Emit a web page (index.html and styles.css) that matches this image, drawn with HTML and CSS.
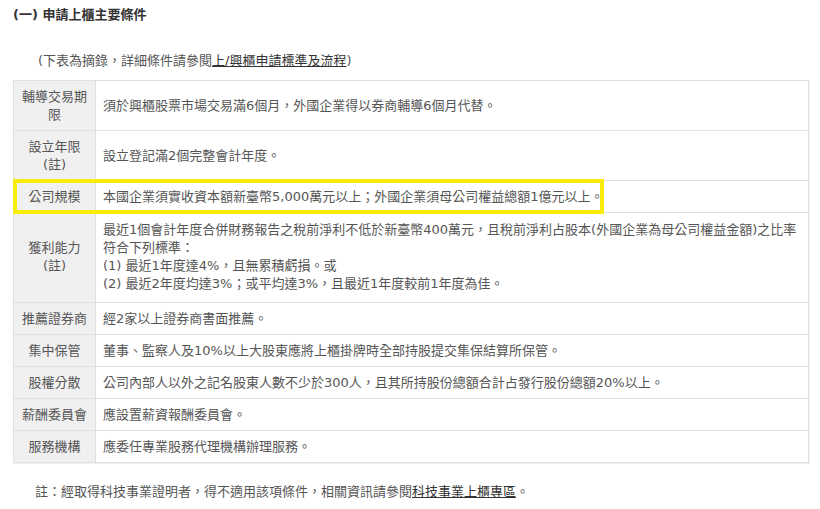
FILE: index.html
```html
<!DOCTYPE html>
<html lang="zh-Hant">
<head>
    <meta charset="UTF-8">
    <meta name="viewport" content="width=device-width, initial-scale=1.0">
    <title>申請上櫃主要條件</title>
    <link rel="stylesheet" href="styles.css">
</head>
<body>
    <div class="page">
        <h3 class="title">(一) 申請上櫃主要條件</h3>
        <p class="intro">(下表為摘錄，詳細條件請參閱<a href="#">上/興櫃申請標準及流程</a>)</p>

        <div class="table-box">
            <table class="terms">
                <colgroup>
                    <col class="col-label">
                    <col>
                </colgroup>
                <tr>
                    <th>輔導交易期限</th>
                    <td>須於興櫃股票市場交易滿6個月，外國企業得以券商輔導6個月代替。</td>
                </tr>
                <tr>
                    <th>設立年限<br>(註)</th>
                    <td>設立登記滿2個完整會計年度。</td>
                </tr>
                <tr>
                    <th>公司規模</th>
                    <td>本國企業須實收資本額新臺幣5,000萬元以上；外國企業須母公司權益總額1億元以上。</td>
                </tr>
                <tr class="tall">
                    <th>獲利能力<br>(註)</th>
                    <td>最近1個會計年度合併財務報告之稅前淨利不低於新臺幣400萬元，且稅前淨利占股本(外國企業為母公司權益金額)之比率<br>符合下列標準：<br>(1) 最近1年度達4%，且無累積虧損。或<br>(2) 最近2年度均達3%；或平均達3%，且最近1年度較前1年度為佳。</td>
                </tr>
                <tr>
                    <th>推薦證券商</th>
                    <td>經2家以上證券商書面推薦。</td>
                </tr>
                <tr>
                    <th>集中保管</th>
                    <td>董事、監察人及10%以上大股東應將上櫃掛牌時全部持股提交集保結算所保管。</td>
                </tr>
                <tr>
                    <th>股權分散</th>
                    <td>公司內部人以外之記名股東人數不少於300人，且其所持股份總額合計占發行股份總額20%以上。</td>
                </tr>
                <tr>
                    <th>薪酬委員會</th>
                    <td>應設置薪資報酬委員會。</td>
                </tr>
                <tr>
                    <th>服務機構</th>
                    <td>應委任專業股務代理機構辦理服務。</td>
                </tr>
            </table>
            <!-- 標示框 -->
            <div class="mark"></div>
        </div>

        <p class="note">註：經取得科技事業證明者，得不適用該項條件，相關資訊請參閱<a href="#">科技事業上櫃專區</a>。</p>
    </div>
</body>
</html>
```

FILE: styles.css
```css
body, h3, p, table, th, td {
    margin: 0;
    padding: 0;
}
body {
    background: #fff;
    color: #555;
    font-family: "DejaVu Sans", "Noto Sans CJK TC", sans-serif;
    font-size: 13px;
    line-height: 18px;
}
.page {
    padding: 6px 11px 0 13px;
}
.title {
    color: #333;
    font-size: 13px;
    font-weight: bold;
}
.intro {
    margin-top: 28px;
    padding-left: 25px;
}
a {
    color: #333;
    text-decoration: underline;
}
.table-box {
    position: relative;
    margin-top: 10px;
}
.terms {
    width: 796px;
    border-collapse: collapse;
    table-layout: fixed;
    box-shadow: 1px 1px 0 #f1f1f1;
}
.col-label {
    width: 82px;
}
.terms th, .terms td {
    border: 1px solid #e0e0e0;
    padding: 7px 7px 6px;
    vertical-align: middle;
    font-weight: normal;
}
.terms th {
    background-color: #f0f0f0;
    text-align: center;
    padding-left: 8px;
    padding-right: 8px;
}
.terms td {
    text-align: left;
}
.terms .tall td, .terms .tall th {
    padding-top: 8px;
    padding-bottom: 9px;
}
/* 黃色標示框 */
.mark {
    position: absolute;
    left: 0;
    top: 99px;
    width: 591px;
    height: 35px;
    box-sizing: border-box;
    border: 4px solid #f7ec0a;
}
.note {
    margin-top: 20px;
    padding-left: 22px;
}
```
